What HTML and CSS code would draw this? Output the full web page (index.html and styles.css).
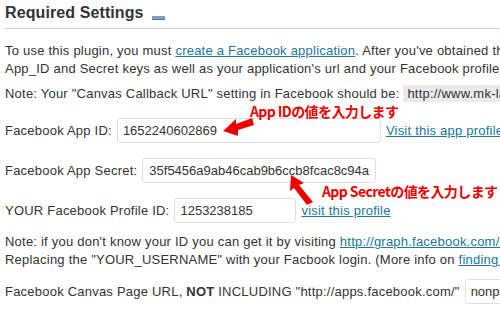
FILE: index.html
```html
<!DOCTYPE html>
<html>
<head>
<meta charset="utf-8">
<link rel="stylesheet" href="styles.css">
</head>
<body>
<div class="page">
  <h3 class="title">Required Settings <span class="toggle"></span></h3>
  <p class="intro">To use this plugin, you must <a href="#">create a Facebook application</a>. After you've obtained the<br>App_ID and Secret keys as well as your application's url and your Facebook profile ID, enter them below.</p>
  <p class="note">Note: Your "Canvas Callback URL" setting in Facebook should be: <code class="code">http://www.mk-lab.jp/wordpress/</code></p>
  <div class="row row-first">
    <span class="label">Facebook App ID:</span>
    <span class="input w-id">1652240602869</span>
    <a href="#">Visit this app profile</a>
  </div>
  <div class="row">
    <span class="label">Facebook App Secret:</span>
    <span class="input w-secret">35f5456a9ab46cab9b6ccb8fcac8c94a</span>
  </div>
  <div class="row">
    <span class="label">YOUR Facebook Profile ID:</span>
    <span class="input w-profile">1253238185</span>
    <a href="#">visit this profile</a>
  </div>
  <p class="note2">Note: if you don't know your ID you can get it by visiting <a href="#">http://graph.facebook.com/YOUR_USERNAME</a><br>Replacing the "YOUR_USERNAME" with your Facbook login. (More info on <a href="#">finding your ID</a>)</p>
  <div class="row row-canvas">
    <span class="label">Facebook Canvas Page URL, <b>NOT</b> INCLUDING "http://apps.facebook.com/"</span>
    <span class="input w-canvas">nonpe</span>
  </div>

  <span class="callout callout-id">App IDの値を入力します</span>
  <span class="callout callout-secret">App Secretの値を入力します</span>
  <svg class="arrows" width="500" height="313" viewBox="0 0 500 313">
    <path d="M223 131 L236 119 L236 124 L252 118 L254 125 L238 130 L238 136 Z" fill="#ee0000"/>
    <path d="M291 175 L304 183 L299 185 L313 202 L307 205 L294 188 L290 191 Z" fill="#ee0000"/>
  </svg>
</div>
</body>
</html>
```

FILE: styles.css
```css
html, body {
  margin: 0;
  padding: 0;
  background: #ffffff;
}

.page {
  position: relative;
  width: 500px;
  height: 313px;
  overflow: hidden;
  padding: 0 0 0 5px;
  box-sizing: border-box;
  font-family: "Liberation Sans", Arial, sans-serif;
  font-size: 13px;
  letter-spacing: 0.22px;
  color: #333333;
  white-space: nowrap;
}

a {
  color: #21759b;
  text-decoration: underline;
}

.title {
  margin: 0;
  padding: 3px 0 5px;
  font-size: 16px;
  font-weight: bold;
  line-height: 20px;
  letter-spacing: 0.1px;
  color: #333333;
  border-bottom: 1px solid #cccccc;
  display: flex;
  align-items: center;
  gap: 8px;
}

.toggle {
  display: inline-block;
  width: 13px;
  height: 3px;
  margin-top: 9px;
  background: #7f9fc8;
  border-bottom: 1px solid #4f73a5;
}

.intro {
  margin: 13px 0 0;
  line-height: 18px;
}

.note {
  margin: 7px 0 0;
  line-height: 18px;
}

.code {
  font-family: "Liberation Sans", Arial, sans-serif;
  font-size: 13px;
  background: #eaeaea;
  padding: 1px 4px;
}

.row {
  display: flex;
  align-items: center;
  gap: 5px;
  height: 25px;
  margin-top: 15px;
}

.row-first {
  margin-top: 15px;
}

.input {
  box-sizing: border-box;
  height: 25px;
  line-height: 23px;
  padding: 0 5px;
  border: 1px solid #dfdfdf;
  border-radius: 3px;
  background: #ffffff;
  color: #333333;
  letter-spacing: 0;
  flex: none;
}

.w-id { width: 264px; }
.w-secret { width: auto; padding: 0 6px; }
.w-profile { width: 122px; }
.w-canvas { width: 60px; }

.note2 {
  margin: 10px 0 0;
  line-height: 18px;
}

.row-canvas {
  margin-top: 10px;
}

.callout {
  position: absolute;
  font-family: "Noto Sans CJK JP", "Noto Sans", sans-serif;
  font-weight: bold;
  font-size: 14px;
  line-height: 18px;
  letter-spacing: -0.6px;
  color: #ee0000;
}

.callout-id {
  left: 250px;
  top: 102px;
}

.callout-secret {
  left: 322px;
  top: 182px;
}

.arrows {
  position: absolute;
  left: 0;
  top: 0;
}
```
